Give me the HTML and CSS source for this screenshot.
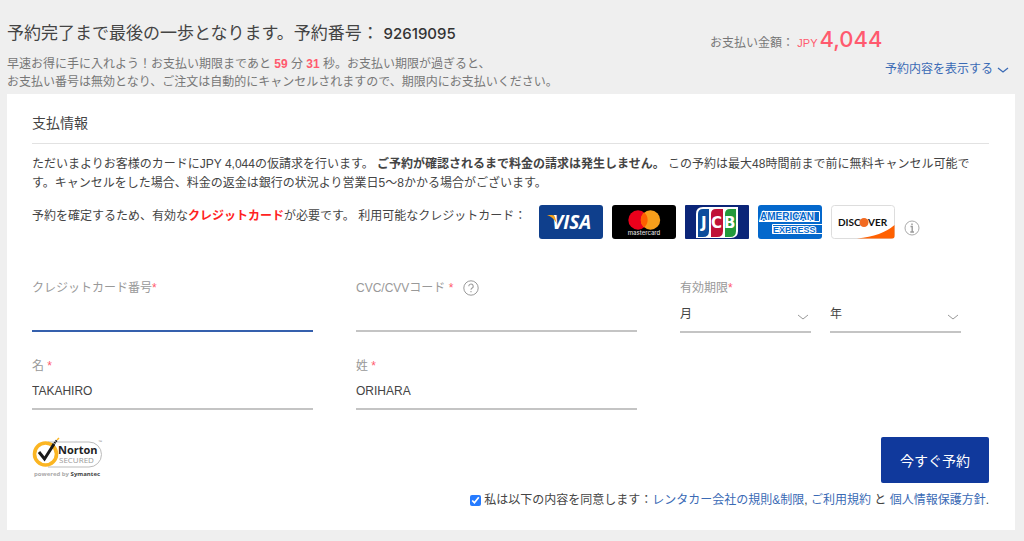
FILE: index.html
```html
<!DOCTYPE html>
<html lang="ja">
<head>
    <meta charset="UTF-8">
    <meta name="viewport" content="width=device-width, initial-scale=1.0">
    <title>お支払い</title>
    <link rel="stylesheet" href="styles.css">
</head>
<body>
    <header class="booking-header">
        <div class="booking-info">
            <h1>予約完了まで最後の一歩となります。予約番号： <span class="booking-number">92619095</span></h1>
            <p>早速お得に手に入れよう！お支払い期限まであと <span class="time">59</span> 分 <span class="time">31</span> 秒。お支払い期限が過ぎると、<br>お支払い番号は無効となり、ご注文は自動的にキャンセルされますので、期限内にお支払いください。</p>
        </div>
        <div class="booking-total">
            <p class="total">お支払い金額： <span class="currency">JPY</span><span class="amount">4,044</span></p>
            <a class="details-link" href="#details">予約内容を表示する
                <svg width="12" height="6" viewBox="0 0 12 6"><path d="M1 1L6 5L11 1" fill="none" stroke="#3a6ab5" stroke-width="1.3"/></svg>
            </a>
        </div>
    </header>

    <main class="payment">
        <h2>支払情報</h2>
        <p class="notice">ただいまよりお客様のカードにJPY 4,044の仮請求を行います。 <strong>ご予約が確認されるまで料金の請求は発生しません。</strong> この予約は最大48時間前まで前に無料キャンセル可能です。キャンセルをした場合、料金の返金は銀行の状況より営業日5〜8かかる場合がございます。</p>

        <div class="accepted">
            <p>予約を確定するため、有効な<strong class="red">クレジットカード</strong>が必要です。 利用可能なクレジットカード：</p>
            <div class="cards">
                <svg width="64" height="34" viewBox="0 0 64 34" role="img" aria-label="VISA">
                    <rect width="64" height="34" rx="3" fill="#0f3f8c"/>
                    <text x="13" y="24" class="visa-text">VISA</text>
                    <path d="M8 10H13Q15.500 10 16 12L17.500 18Q14 12 8 10Z" fill="#f5a11c"/>
                </svg>
                <svg width="64" height="34" viewBox="0 0 64 34" role="img" aria-label="mastercard">
                    <rect width="64" height="34" rx="3" fill="#000"/>
                    <circle cx="26" cy="15" r="9.700" fill="#eb001b"/>
                    <circle cx="38.500" cy="15" r="9.700" fill="#f79e1b"/>
                    <path d="M32.200 7.600a9.700 9.700 0 0 1 0 14.800a9.700 9.700 0 0 1 0-14.800" fill="#ff5f00"/>
                    <text x="32" y="30" class="mc-text">mastercard</text>
                </svg>
                <svg width="64" height="34" viewBox="0 0 64 34" role="img" aria-label="JCB">
                    <rect width="64" height="34" rx="1" fill="#0b2578"/>
                    <path d="M18 2H53V26Q53 33 46 33H11V9Q11 2 18 2Z" fill="#fff"/>
                    <path d="M18 4H24V26Q24 32 18 32H13V9Q13 4 18 4Z" fill="#0d4d9d"/>
                    <path d="M31 4H38V26Q38 32 32 32H26V9Q26 4 31 4Z" fill="#c01238"/>
                    <path d="M45 4H51V26Q51 32 45 32H40V9Q40 4 45 4Z" fill="#239a3b"/>
                    <text y="23" class="jcb-text"><tspan x="16">J</tspan><tspan x="26">C</tspan><tspan x="39">B</tspan></text>
                </svg>
                <svg width="64" height="34" viewBox="0 0 64 34" role="img" aria-label="AMERICAN EXPRESS">
                    <rect width="64" height="34" rx="3" fill="#0468cc"/>
                    <path d="M4 6.500H61.500V16.500H1M64 19.500H14.500V28.500H64" fill="none" stroke="#fff"/>
                    <text x="2" y="15" class="amex-text">AMERICAN</text>
                    <text x="15" y="28" class="amex-text amex-small">EXPRESS</text>
                </svg>
                <svg width="64" height="34" viewBox="0 0 64 34" role="img" aria-label="DISCOVER">
                    <rect x="0.500" y="0.500" width="63" height="33" rx="3" fill="#fff" stroke="#ddd"/>
                    <path d="M26 33.500Q51 31 63.500 20V31Q63.500 33.500 61 33.500Z" fill="#ff6000"/>
                    <text x="7" y="21" class="discover-text">DISC</text>
                    <circle cx="33" cy="17.500" r="4.500" fill="#f26a21"/>
                    <text x="37" y="21" class="discover-text">VER</text>
                </svg>
                <svg class="info-icon" width="16" height="16" viewBox="0 0 16 16" role="img" aria-label="情報">
                    <circle cx="8" cy="8" r="7" fill="none" stroke="#aaa"/>
                    <path d="M8 3.500V5M6.500 6.500H8.200V12M6.300 12H10" fill="none" stroke="#999" stroke-width="1.400"/>
                </svg>
            </div>
        </div>

        <form>
            <div class="fields">
                <div class="field">
                    <label for="card-number"><span>クレジットカード番号<span class="required">*</span></span></label>
                    <input class="active" type="text" id="card-number">
                </div>
                <div class="field">
                    <label for="cvc"><span>CVC/CVVコード <span class="required">*</span></span>
                        <svg class="help-icon" width="16" height="16" viewBox="0 0 16 16">
                            <circle cx="8" cy="8" r="7.200" fill="none" stroke="#999"/>
                            <path d="M5.800 6.300a2.200 2.200 0 1 1 3.400 1.800Q8 8.700 8 9.800M8 11V12.200" fill="none" stroke="#999" stroke-width="1.100"/>
                        </svg>
                    </label>
                    <input type="text" id="cvc">
                </div>
                <div class="field">
                    <label for="month"><span>有効期限<span class="required">*</span></span></label>
                    <div class="expiry">
                        <div class="select-box">
                            <select id="month"><option>月</option></select>
                            <svg width="12" height="6" viewBox="0 0 12 6"><path d="M1 1L6 5L11 1" fill="none" stroke="#999"/></svg>
                        </div>
                        <div class="select-box">
                            <select id="year" aria-label="年"><option>年</option></select>
                            <svg width="12" height="6" viewBox="0 0 12 6"><path d="M1 1L6 5L11 1" fill="none" stroke="#999"/></svg>
                        </div>
                    </div>
                </div>
                <div class="field">
                    <label for="first-name"><span>名 <span class="required">*</span></span></label>
                    <input type="text" id="first-name" value="TAKAHIRO">
                </div>
                <div class="field">
                    <label for="last-name"><span>姓 <span class="required">*</span></span></label>
                    <input type="text" id="last-name" value="ORIHARA">
                </div>
            </div>

            <div class="actions">
                <svg width="72" height="42" viewBox="0 0 72 42" role="img" aria-label="Norton Secured powered by Symantec">
                    <path d="M16 5H57a12 12 0 0 1 0 25H16" fill="#fff" stroke="#bbb"/>
                    <circle cx="13.500" cy="17" r="11" fill="#fff" stroke="#fbb522" stroke-width="3.600"/>
                    <path d="M7 15L12.500 22L22 7" fill="none" stroke="#1a1a1a" stroke-width="3"/>
                    <path d="M21 8L25 3" stroke="#1a1a1a" stroke-width="2" stroke-dasharray="1.500 0.700"/>
                    <path d="M25 3L27 1" stroke="#fbb522" stroke-width="1.500"/>
                    <text x="26" y="17" class="norton-text">Norton</text>
                    <text x="27" y="26" class="secured-text">SECURED</text>
                    <text x="66" y="6" class="tm-text">™</text>
                    <text x="2" y="39" class="powered-text">powered by <tspan class="symantec-text">Symantec</tspan></text>
                </svg>
                <button type="submit">今すぐ予約</button>
            </div>

            <div class="agree">
                <input type="checkbox" id="agree" checked>
                <label for="agree">私は以下の内容を同意します：</label>
                <span class="agree-links"><a href="#rules">レンタカー会社の規則&amp;制限</a>, <a href="#terms">ご利用規約</a> と <a href="#privacy">個人情報保護方針</a>.</span>
            </div>
        </form>
    </main>
</body>
</html>
```
FILE: styles.css
```css
* {
    box-sizing: border-box;
}
body {
    font-family: "Liberation Sans", "Noto Sans CJK JP", sans-serif;
    font-size: 12px;
    line-height: 19px;
    margin: 0;
    color: #444;
    background-color: #efefef;
}
h1, h2, p {
    margin: 0;
    font-weight: normal;
}
a {
    color: #3a6ab5;
    text-decoration: none;
}
a:hover {
    text-decoration: underline;
}
.booking-header {
    display: flex;
    justify-content: space-between;
    padding: 22px 15px 3px 7px;
}
.booking-info h1 {
    font-size: 17px;
    line-height: 24px;
    margin-bottom: 9px;
}
.booking-number {
    font-family: Inter, sans-serif;
    font-size: 15px;
    font-weight: 500;
    color: #333;
}
.booking-info p {
    line-height: 18px;
    color: #777;
}
.time {
    color: #ff5a6e;
    font-weight: bold;
}
.booking-total {
    width: 299px;
}
.total {
    line-height: 34px;
    color: #777;
}
.currency {
    font-size: 11px;
    margin-right: 2px;
    color: #ff5a6e;
}
.amount {
    font-family: Inter, sans-serif;
    font-size: 22px;
    font-weight: 500;
    color: #ff5a6e;
}
.details-link {
    display: flex;
    justify-content: flex-end;
    align-items: center;
    gap: 4px;
}

.payment {
    margin: 0 9px 11px 7px;
    padding: 19px 26px 20px 25px;
    background-color: #fff;
}
.payment h2 {
    font-size: 14px;
    line-height: 20px;
    padding-bottom: 10px;
    border-bottom: 1px solid #e2e2e2;
}
.notice {
    margin-top: 11px;
}
.accepted {
    display: flex;
    gap: 13px;
    margin-top: 12px;
}
.accepted p {
    padding-top: 2px;
}
.red {
    color: #f22;
}
.cards {
    display: flex;
    gap: 9px;
}
.info-icon {
    margin-top: 15px;
}

/* Formulario de la tarjeta */
.fields {
    display: grid;
    grid-template-columns: repeat(3, 1fr);
    gap: 23px 43px;
    padding-right: 28px;
    margin-top: 39px;
}
.field label {
    display: flex;
    align-items: center;
    gap: 4px;
    height: 20px;
    color: #999;
}
.required {
    color: #ff5a6e;
}
.help-icon {
    margin-left: 6px;
}
.field input, .field select {
    display: block;
    width: 100%;
    height: 34px;
    padding: 0 0 2px;
    font-family: inherit;
    font-size: 12px;
    color: #444;
    background-color: transparent;
    border: none;
    border-bottom: 2px solid #c4c4c4;
    border-radius: 0;
    outline: none;
    appearance: none;
}
.field select {
    height: 35px;
}
.field input.active {
    border-bottom-color: #3560ad;
}
.expiry {
    display: grid;
    grid-template-columns: 1fr 1fr;
    gap: 19px;
}
.select-box {
    position: relative;
}
.select-box svg {
    position: absolute;
    right: 2px;
    top: 16px;
    pointer-events: none;
}

.actions {
    display: flex;
    justify-content: space-between;
    align-items: flex-start;
    margin-top: 27px;
}
button {
    width: 108px;
    height: 46px;
    font-family: inherit;
    font-size: 14px;
    color: #fff;
    background-color: #10399c;
    border: none;
    border-radius: 2px;
    cursor: pointer;
}
.agree {
    display: flex;
    justify-content: flex-end;
    align-items: center;
    margin-top: 8px;
}
.agree input {
    width: 11px;
    height: 11px;
    margin: 0 3px 0 0;
    accent-color: #267bff;
}

/* Logos */
.visa-text {
    font: italic bold 19px "Open Sans", sans-serif;
    fill: #fff;
}
.mc-text {
    font: 500 6px Inter, sans-serif;
    fill: #ddd;
    text-anchor: middle;
}
.jcb-text {
    font: bold 15px "DejaVu Sans", sans-serif;
    fill: #fff;
}
.amex-text {
    font: bold 10px "Liberation Sans", sans-serif;
    fill: #0468cc;
    stroke: #fff;
    stroke-width: 2px;
    paint-order: stroke;
}
.amex-small {
    font-size: 9px;
}
.discover-text {
    font: bold 10px Lato, sans-serif;
    fill: #111;
}
.norton-text {
    font: bold 11px "Open Sans", sans-serif;
    fill: #222;
}
.secured-text {
    font: 8px "Open Sans", sans-serif;
    fill: #999;
}
.tm-text {
    font: 4px "Liberation Sans", sans-serif;
    fill: #888;
}
.powered-text {
    font: bold 6px "Open Sans", sans-serif;
    fill: #aaa;
}
.symantec-text {
    fill: #444;
}
```
